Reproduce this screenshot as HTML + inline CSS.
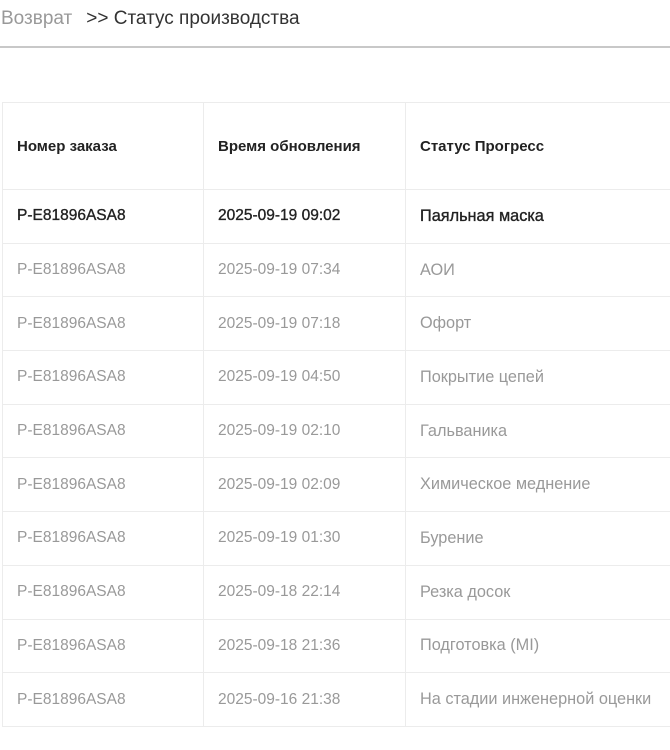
<!DOCTYPE html>
<html><head><meta charset="utf-8"><style>
body{margin:0;width:670px;height:750px;overflow:hidden;background:#fff;font-family:"Liberation Sans",sans-serif;}
.bc{position:absolute;left:1px;top:8px;font-size:19px;color:#333;white-space:nowrap}
.bc .b{color:#999;margin-right:14px}
.hr{position:absolute;left:0;top:46px;width:670px;height:2px;background:#c8c8c8}
table{position:absolute;left:2px;top:102px;border-collapse:collapse;table-layout:fixed;width:806px}
td{border:1px solid #ececec;padding:0 0 0 14px;font-size:15.5px;color:#999;height:52.7px;white-space:nowrap}
td:nth-child(3){font-size:16.3px}
tr.h td{height:86px;font-weight:bold;color:#222;font-size:15px}
tr.f td{color:#222;-webkit-text-stroke:0.35px #222}
</style></head><body>
<div class="bc"><span class="b">Возврат</span>&gt;&gt; Статус производства</div>
<div class="hr"></div>
<table>
<colgroup><col style="width:201px"><col style="width:202px"><col style="width:403px"></colgroup>
<tr class="h"><td>Номер заказа</td><td>Время обновления</td><td>Статус Прогресс</td></tr>
<tr class="f"><td>P-E81896ASA8</td><td>2025-09-19 09:02</td><td>Паяльная маска</td></tr>
<tr><td>P-E81896ASA8</td><td>2025-09-19 07:34</td><td>АОИ</td></tr>
<tr><td>P-E81896ASA8</td><td>2025-09-19 07:18</td><td>Офорт</td></tr>
<tr><td>P-E81896ASA8</td><td>2025-09-19 04:50</td><td>Покрытие цепей</td></tr>
<tr><td>P-E81896ASA8</td><td>2025-09-19 02:10</td><td>Гальваника</td></tr>
<tr><td>P-E81896ASA8</td><td>2025-09-19 02:09</td><td>Химическое меднение</td></tr>
<tr><td>P-E81896ASA8</td><td>2025-09-19 01:30</td><td>Бурение</td></tr>
<tr><td>P-E81896ASA8</td><td>2025-09-18 22:14</td><td>Резка досок</td></tr>
<tr><td>P-E81896ASA8</td><td>2025-09-18 21:36</td><td>Подготовка (MI)</td></tr>
<tr><td>P-E81896ASA8</td><td>2025-09-16 21:38</td><td>На стадии инженерной оценки</td></tr>
</table>
</body></html>
